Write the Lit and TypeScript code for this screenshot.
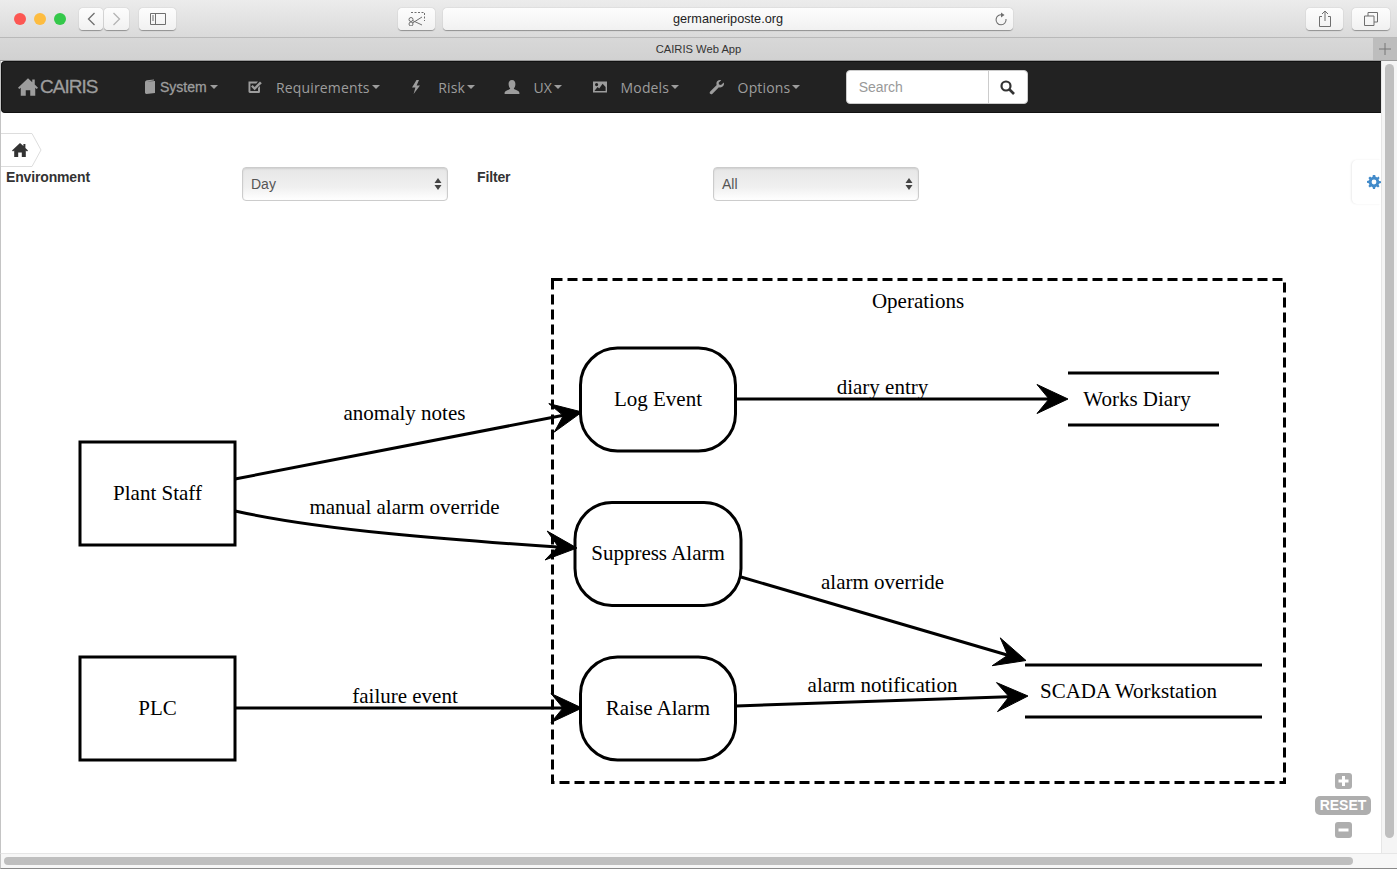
import { LitElement, html, css, svg } from "lit";
import { customElement } from "lit/decorators.js";

type Pt = [number, number];

function vee(tip: Pt, from: Pt) {
  const dx = tip[0] - from[0], dy = tip[1] - from[1];
  const d = Math.hypot(dx, dy), ux = dx / d, uy = dy / d, nx = -uy, ny = ux;
  const L = 31, W = 14.5, N = 19;
  const p = (a: number, b: number) => `${(tip[0] - ux * a + nx * b).toFixed(1)},${(tip[1] - uy * a + ny * b).toFixed(1)}`;
  return svg`<polygon class="vee" points="${p(0, 0)} ${p(L, W)} ${p(N, 0)} ${p(L, -W)}"></polygon>`;
}

const icons = {
  home: svg`<path d="M8 1 L0 8.5 L1 9.6 L2.2 8.6 V15 H6.2 V10.5 H9.8 V15 H13.8 V8.6 L15 9.6 L16 8.5 L13.4 6 V2 H11.4 V4.1 Z"></path>`,
  book: svg`<path d="M2 3.4 C2 2 3 1.4 4 1.2 L11 0.4 V1.6 L4 2.6 L12 2 V14 L3.4 15 C2.6 15 2 14.4 2 13.6 Z"></path>`,
  check: svg`<path d="M1.5 2.5 H11 L9.2 4.4 H3.4 V12 H11 V9 L13 7 V12.4 C13 13.4 12.4 14 11.4 14 H2.9 C2 14 1.5 13.4 1.5 12.6 Z"></path><path d="M4 7.6 L5.6 6 L7.6 8 L13 2.4 L14.8 4.2 L7.6 11.2 Z"></path>`,
  flash: svg`<path d="M7.5 1 L3 8.6 H6.4 L4.6 15 L11 6.6 H7.6 L10 1 Z"></path>`,
  user: svg`<path d="M8 1 C10.4 1 11.4 2.8 11.4 5 C11.4 7 10.6 8.6 9.8 9.6 C10.2 11 15.4 11.2 15.4 14 V15 H0.6 V14 C0.6 11.2 5.8 11 6.2 9.6 C5.4 8.6 4.6 7 4.6 5 C4.6 2.8 5.6 1 8 1 Z"></path>`,
  picture: svg`<path fill-rule="evenodd" d="M1 2.5 H15 V13.5 H1 Z M4.6 4 A1.6 1.6 0 1 0 4.6 7.2 A1.6 1.6 0 1 0 4.6 4 Z M2.4 12 H13.6 V8 L10.6 4.8 L7.2 9.4 L5.6 8 Z"></path>`,
  wrench: svg`<path d="M14.8 3.6 L12 6 L10 5.6 L9.6 3.8 L12.2 1.2 C10 0.4 7.4 1.8 7.4 4.4 C7.4 5 7.5 5.6 7.7 6 L1.2 12.4 C0.4 13.2 0.6 14.2 1.2 14.8 C1.8 15.4 2.8 15.4 3.5 14.7 L9.9 8.2 C12.6 9.2 15.8 7 14.8 3.6 Z"></path>`,
};

const navItems: [keyof typeof icons, string][] = [
  ["check", "Requirements"],
  ["flash", "Risk"],
  ["user", "UX"],
  ["picture", "Models"],
  ["wrench", "Options"],
];

@customElement("app-root")
export class AppRoot extends LitElement {
  static styles = css`
    :host { display: block; width: 1397px; height: 869px; overflow: hidden; position: relative; background: #fff; font-family: "Liberation Sans", Arial, sans-serif; }
    .window { display: flex; flex-direction: column; height: 869px; }
    .toolbar { height: 38px; flex: none; display: flex; align-items: flex-start; padding: 8px 0 0 14px; box-sizing: border-box; background: linear-gradient(#ececec, #dadada); border-bottom: 1px solid #b9b9b9; }
    .lights { display: flex; gap: 8px; margin-top: 5px; }
    .light { width: 12px; height: 12px; border-radius: 50%; }
    .red { background: #fc5753; } .yellow { background: #fdbc40; } .green { background: #34c84a; }
    .btn { height: 22px; box-sizing: border-box; display: flex; align-items: center; justify-content: center; background: linear-gradient(#fdfdfd, #f1f1f1); border-radius: 4px; box-shadow: 0 0.5px 1px rgba(0,0,0,.35); }
    .btn svg { fill: none; stroke: #6f6f6f; stroke-width: 1; }
    .back { width: 24px; margin-left: 13px; }
    .forward { width: 25px; margin-left: 1px; }
    .forward svg { stroke: #b4b4b4; }
    .side { width: 37px; margin-left: 10px; }
    .scissor { width: 37px; margin-left: 222px; }
    .url { width: 570px; margin-left: 8px; position: relative; font-size: 12.7px; color: #222; }
    .reload { position: absolute; right: 5px; top: 4px; }
    .share { width: 37px; margin-left: 293px; }
    .tabs { width: 38px; margin-left: 9px; }
    .tabbar { height: 23px; flex: none; position: relative; display: flex; align-items: center; justify-content: center; font-size: 11.2px; color: #333; background: linear-gradient(#d8d8d8, #d1d1d1); box-sizing: border-box; border-bottom: 1px solid #9a9a9a; }
    .plus { position: absolute; right: 0; top: 0; width: 24px; height: 22px; background: #bdbdbd; display: flex; align-items: center; justify-content: center; }
    .body { flex: 1; min-height: 0; display: flex; }
    .main { flex: 1; min-width: 0; display: flex; flex-direction: column; position: relative; border-left: 1px solid #c4c4c4; }
    .navbar { height: 52px; flex: none; display: flex; align-items: center; background: #222; color: #9d9d9d; box-sizing: border-box; border: 1px solid #111; border-radius: 4px 0 0 4px; border-right: 0; padding-left: 16px; }
    .navbar svg { fill: #9d9d9d; display: block; }
    .brand { display: flex; align-items: center; gap: 2px; font-size: 19px; letter-spacing: -1px; font-weight: 400; -webkit-text-stroke: 0.3px #9d9d9d; width: 125px; flex: none; }
    .system { display: flex; align-items: center; font-size: 14px; letter-spacing: 0; -webkit-text-stroke: 0.3px #9d9d9d; width: 104px; flex: none; }
    .system svg { margin-right: 1px; }
    .item { display: flex; align-items: center; font-family: "Open Sans", sans-serif; font-size: 14px; letter-spacing: 0.15px; margin-right: 29.5px; }
    .item .ic { width: 29px; flex: none; }
    .caret { width: 0; height: 0; border-left: 4px solid transparent; border-right: 4px solid transparent; border-top: 4px solid #9d9d9d; margin-left: 2px; }
    .system .caret { margin-left: 3px; }
    .search { display: flex; height: 34px; width: 182px; margin-left: 16px; flex: none; background: #fff; border-radius: 4px; border: 1px solid #ccc; box-sizing: border-box; }
    .search .ph { width: 142px; box-sizing: border-box; padding-left: 12px; line-height: 32px; font-size: 14px; color: #999; letter-spacing: -0.1px; border-right: 1px solid #ccc; }
    .search .go { flex: 1; display: flex; align-items: center; justify-content: center; }
    .search svg { fill: none; stroke: #333; stroke-width: 2.2; }
    .page { flex: 1; min-height: 0; display: flex; flex-direction: column; padding-top: 20px; position: relative; }
    .crumb { height: 34px; flex: none; }
    .crumb svg { display: block; }
    .filters { height: 34px; flex: none; display: flex; align-items: flex-start; font-size: 14px; font-weight: 700; color: #333; }
    .filters label { padding-top: 2px; letter-spacing: -0.15px; }
    .env-label { margin-left: 5px; width: 236px; }
    .filter-label { margin-left: 29px; width: 236px; }
    .select { width: 206px; height: 34px; box-sizing: border-box; border: 1px solid #ccc; border-radius: 4px; background: linear-gradient(#e6e6e6, #f0f0f0 60%, #fff); box-shadow: inset 0 1px 2px rgba(0,0,0,.1); display: flex; align-items: center; justify-content: space-between; padding: 0 5px 0 8px; font-size: 14px; font-weight: 400; color: #555; }
    .select svg { fill: #444; display: block; }
    .diagram { flex: none; display: block; width: 1380px; height: 652px; }
    .diagram text { font-family: "Liberation Serif", "Times New Roman", serif; font-size: 21px; fill: #000; text-anchor: middle; }
    .shape { fill: none; stroke: #000; stroke-width: 3; }
    .dash { stroke-dasharray: 10 5; }
    .vee { fill: #000; stroke: #000; stroke-width: 1; stroke-linejoin: miter; }
    .gear { position: absolute; right: 0; top: 47px; width: 29px; height: 44px; box-sizing: border-box; background: #fff; border-radius: 5px 0 0 5px; box-shadow: -1px 0 2px rgba(0,0,0,.08); display: flex; align-items: center; padding-left: 15px; }
    .gear svg { fill: #428bca; flex: none; }
    .zoom { position: absolute; right: 10px; top: 660px; width: 56px; display: flex; flex-direction: column; align-items: center; gap: 7px; }
    .zbtn { width: 17px; height: 16px; border-radius: 3px; background: #aeaeae; display: block; }
    .reset { height: 19px; width: 56px; border-radius: 5px; background: #aeaeae; color: #fff; font-size: 14px; font-weight: 700; line-height: 19px; text-align: center; }
    .zbtn svg { stroke: #fff; stroke-width: 3; display: block; }
    .vscroll { width: 16px; flex: none; background: #f5f5f5; border-left: 1px solid #e6e6e6; box-sizing: border-box; }
    .vscroll div { width: 9px; height: 774px; margin: 3px 0 0 3px; border-radius: 5px; background: #bfbfbf; }
    .hscroll { height: 16px; flex: none; background: #f7f7f7; border-top: 1px solid #e6e6e6; border-bottom: 1px solid #8a8a8a; box-sizing: border-box; padding: 3px 0 0 3px; border-left: 1px solid #c4c4c4; }
    .hscroll div { width: 1349px; height: 8px; border-radius: 4px; background: #bfbfbf; }
  `;

  private icon(name: keyof typeof icons, size = 16) {
    return html`<svg width=${size} height=${size} viewBox="0 0 16 16">${icons[name]}</svg>`;
  }

  private diagram() {
    const edges: { d: string; tip: Pt; from: Pt }[] = [
      { d: "M235 479 L570 414", tip: [582, 412], from: [235, 479] },
      { d: "M235 511 C320 530 450 540 565 547.5", tip: [577, 548], from: [500, 542] },
      { d: "M736 399 H1056", tip: [1068, 399], from: [900, 399] },
      { d: "M741 577 L1014 657", tip: [1026, 660.5], from: [741, 577] },
      { d: "M235 708 H570", tip: [582, 708], from: [400, 708] },
      { d: "M736 706 L1016 696.4", tip: [1028, 696], from: [736, 706] },
    ];
    return html`<svg class="diagram" viewBox="1 201 1380 652">
      <rect class="shape dash" x="552.5" y="279.5" width="732" height="503"></rect>
      <rect class="shape" x="80" y="442" width="155" height="103"></rect>
      <rect class="shape" x="80" y="657" width="155" height="103"></rect>
      <rect class="shape" x="580.5" y="348" width="155" height="103" rx="37"></rect>
      <rect class="shape" x="575" y="502.5" width="166" height="103" rx="37"></rect>
      <rect class="shape" x="580.5" y="657" width="155" height="103" rx="37"></rect>
      <path class="shape" d="M1068 373 H1219 M1068 425 H1219 M1025 665 H1262 M1025 717 H1262"></path>
      ${edges.map((e) => svg`<path class="shape" d="${e.d}"></path>${vee(e.tip, e.from)}`)}
      <text x="918" y="308">Operations</text>
      <text x="658" y="406">Log Event</text>
      <text x="658" y="560">Suppress Alarm</text>
      <text x="658" y="715">Raise Alarm</text>
      <text x="157.5" y="500">Plant Staff</text>
      <text x="157.5" y="715">PLC</text>
      <text x="1137" y="406">Works Diary</text>
      <text x="1128.5" y="698">SCADA Workstation</text>
      <text x="404.5" y="420">anomaly notes</text>
      <text x="404.5" y="514">manual alarm override</text>
      <text x="405" y="703">failure event</text>
      <text x="882.5" y="394">diary entry</text>
      <text x="882.5" y="589">alarm override</text>
      <text x="882.5" y="692">alarm notification</text>
    </svg>`;
  }

  private updown() {
    return html`<svg width="8" height="14" viewBox="0 0 8 14"><path d="M4 1 L7.5 6 H0.5 Z M4 13 L0.5 8 H7.5 Z"></path></svg>`;
  }

  render() {
    return html`<div class="window">
      <div class="toolbar">
        <div class="lights"><span class="light red"></span><span class="light yellow"></span><span class="light green"></span></div>
        <div class="btn back"><svg width="9" height="14" viewBox="0 0 9 14"><path d="M7.5 1 L1.5 7 L7.5 13" stroke-width="1.3"></path></svg></div>
        <div class="btn forward"><svg width="9" height="14" viewBox="0 0 9 14"><path d="M1.5 1 L7.5 7 L1.5 13" stroke-width="1.3"></path></svg></div>
        <div class="btn side"><svg width="16" height="12" viewBox="0 0 16 12"><path d="M0.5 0.5 H15.5 V11.5 H0.5 Z M5.5 0.5 V11.5 M2 3 H4 M2 5 H4 M2 7 H4"></path></svg></div>
        <div class="btn scissor"><svg width="18" height="14" viewBox="0 0 18 14"><path d="M3 0.5 H16.5 V9" stroke-dasharray="2 1.5"></path><circle cx="3" cy="7.5" r="2"></circle><circle cx="3" cy="12" r="2"></circle><path d="M4.5 8.5 L14 13 M4.5 11 L14 5"></path></svg></div>
        <div class="btn url">germaneriposte.org
          <svg class="reload" width="14" height="14" viewBox="0 0 14 14"><path d="M8.5 3 A5 5 0 1 0 12 7" stroke-width="1.1"></path><path d="M7 0.5 L10.5 3 L7 5.5 Z" fill="#6f6f6f" stroke="none"></path></svg>
        </div>
        <div class="btn share"><svg width="14" height="18" viewBox="0 0 14 18"><path d="M4 6.5 H1.5 V16.5 H12.5 V6.5 H10 M7 11 V1.5 M4 4 L7 1 L10 4"></path></svg></div>
        <div class="btn tabs"><svg width="14" height="14" viewBox="0 0 14 14"><path d="M0.5 4 H10 V13.5 H0.5 Z M4 4 V0.5 H13.5 V10 H10"></path></svg></div>
      </div>
      <div class="tabbar">CAIRIS Web App
        <div class="plus"><svg width="12" height="12" viewBox="0 0 12 12"><path d="M6 0 V12 M0 6 H12" stroke="#777" stroke-width="1"></path></svg></div>
      </div>
      <div class="body">
        <div class="main">
          <div class="navbar">
            <div class="brand">${this.icon("home", 20)}<span>CAIRIS</span></div>
            <div class="system">${this.icon("book", 16)}<span>System</span><span class="caret"></span></div>
            ${navItems.map(([ic, label]) => html`<div class="item"><span class="ic">${this.icon(ic, 16)}</span><span>${label}</span><span class="caret"></span></div>`)}
            <div class="search"><div class="ph">Search</div><div class="go"><svg width="15" height="15" viewBox="0 0 15 15"><circle cx="6" cy="6" r="4.5"></circle><path d="M9.5 9.5 L14 14" stroke-width="2.6"></path></svg></div></div>
          </div>
          <div class="page">
            <div class="crumb"><svg width="44" height="34" viewBox="0 0 44 34">
              <path d="M0 0.5 H31 L40 17 L31 33.5 H0" fill="#fff" stroke="#ddd"></path>
              <g transform="translate(11 9)" fill="#333">${icons.home}</g>
            </svg></div>
            <div class="filters">
              <label class="env-label">Environment</label>
              <div class="select">Day${this.updown()}</div>
              <label class="filter-label">Filter</label>
              <div class="select">All${this.updown()}</div>
            </div>
            ${this.diagram()}
            <div class="gear"><svg width="14" height="14" viewBox="0 0 14 14"><path fill-rule="evenodd" d="M5.8 0 H8.2 L8.6 1.8 L10.2 2.5 L11.8 1.5 L12.5 3.2 L11.5 4.6 L12.2 6 L14 6.2 V8 L12.2 8.4 L11.5 9.8 L12.5 11.2 L11 12.6 L9.6 11.6 L8.4 12.2 L8 14 H6 L5.6 12.2 L4.2 11.6 L2.8 12.6 L1.4 11 L2.4 9.6 L1.8 8.2 L0 7.8 V6 L1.8 5.6 L2.4 4.4 L1.4 3 L3 1.5 L4.4 2.4 L5.6 1.8 Z M7 4.6 A2.4 2.4 0 1 0 7 9.4 A2.4 2.4 0 1 0 7 4.6 Z"></path></svg></div>
            <div class="zoom">
              <span class="zbtn"><svg width="17" height="16" viewBox="0 0 17 16"><path d="M8.5 3 V13 M3.5 8 H13.5"></path></svg></span>
              <div class="reset">RESET</div>
              <span class="zbtn"><svg width="17" height="16" viewBox="0 0 17 16"><path d="M3.5 8 H13.5"></path></svg></span>
            </div>
          </div>
        </div>
        <div class="vscroll"><div></div></div>
      </div>
      <div class="hscroll"><div></div></div>
    </div>`;
  }
}
